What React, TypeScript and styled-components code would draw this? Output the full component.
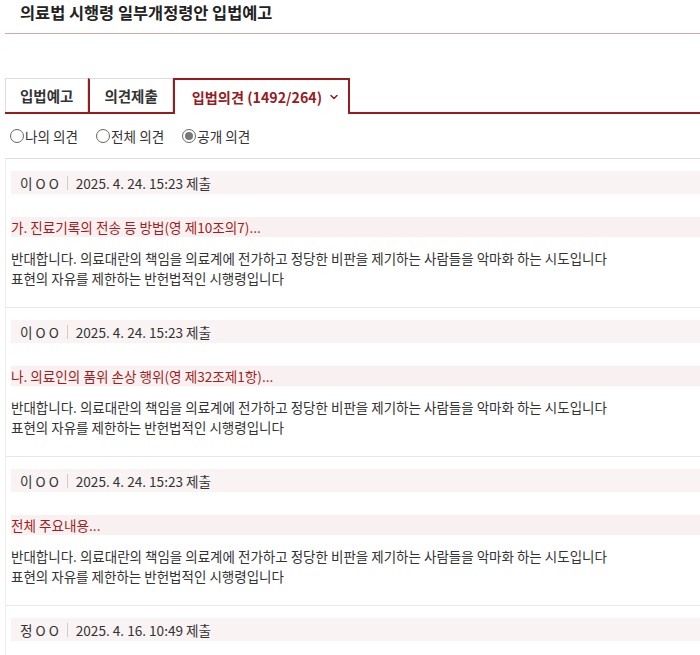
import React, { useState } from "react";
import styled, { createGlobalStyle } from "styled-components";
import { ChevronDown } from "lucide-react";

const GlobalStyle = createGlobalStyle`
  body {
    margin: 0;
    background: #fff;
    font-family: "Noto Sans CJK KR", "Noto Sans", sans-serif;
    color: #333;
  }
`;

interface Opinion {
  name: string;
  date: string;
  subject?: string;
  lines?: string[];
}

const opinions: Opinion[] = [
  {
    name: "이 O O",
    date: "2025. 4. 24. 15:23 제출",
    subject: "가. 진료기록의 전송 등 방법(영 제10조의7)...",
    lines: [
      "반대합니다. 의료대란의 책임을 의료계에 전가하고 정당한 비판을 제기하는 사람들을 악마화 하는 시도입니다",
      "표현의 자유를 제한하는 반헌법적인 시행령입니다",
    ],
  },
  {
    name: "이 O O",
    date: "2025. 4. 24. 15:23 제출",
    subject: "나. 의료인의 품위 손상 행위(영 제32조제1항)...",
    lines: [
      "반대합니다. 의료대란의 책임을 의료계에 전가하고 정당한 비판을 제기하는 사람들을 악마화 하는 시도입니다",
      "표현의 자유를 제한하는 반헌법적인 시행령입니다",
    ],
  },
  {
    name: "이 O O",
    date: "2025. 4. 24. 15:23 제출",
    subject: "전체 주요내용...",
    lines: [
      "반대합니다. 의료대란의 책임을 의료계에 전가하고 정당한 비판을 제기하는 사람들을 악마화 하는 시도입니다",
      "표현의 자유를 제한하는 반헌법적인 시행령입니다",
    ],
  },
  // the last entry runs below the fold, only its header shows
  {
    name: "정 O O",
    date: "2025. 4. 16. 10:49 제출",
  },
];

const Page = styled.div`
  padding-left: 5px;
  height: 655px;
  overflow: hidden;
`;

const Title = styled.h1`
  margin: 0;
  padding: 0 0 9px 15px;
  font-size: 16.4px;
  line-height: 24px;
  font-weight: 700;
  color: #222;
  border-bottom: 1px solid #d6a9a9;
`;

const Tabs = styled.div`
  display: flex;
  margin-top: 44px;
  border-bottom: 2px solid #981b1e;
  height: 34px;
`;

const Tab = styled.button<{ active?: boolean }>`
  display: flex;
  align-items: center;
  gap: 6px;
  padding: ${(p) => (p.active ? "0 8px 0 17px" : "0 14px")};
  margin-bottom: ${(p) => (p.active ? "-2px" : "0")};
  background: #fff;
  font-family: inherit;
  font-size: ${(p) => (p.active ? "14.2px" : "14.5px")};
  font-weight: 700;
  color: ${(p) => (p.active ? "#981b1e" : "#333")};
  border: ${(p) => (p.active ? "2px solid #981b1e" : "1px solid #ddd")};
  border-bottom: none;
  cursor: pointer;

  & + & {
    border-left: ${(p) => (p.active ? "2px solid #981b1e" : "none")};
  }
`;

const RadioRow = styled.div`
  display: flex;
  align-items: center;
  gap: 18px;
  height: 44px;
  padding-left: 5px;
`;

const RadioLabel = styled.label`
  display: flex;
  align-items: center;
  gap: 1px;
  font-size: 13.6px;
  color: #333;
  cursor: pointer;
`;

const RadioDot = styled.span<{ checked?: boolean }>`
  width: 12px;
  height: 12px;
  border-radius: 50%;
  border: 1px solid #666;
  display: flex;
  align-items: center;
  justify-content: center;

  &::after {
    content: "";
    width: 8px;
    height: 8px;
    border-radius: 50%;
    background: ${(p) => (p.checked ? "#777" : "transparent")};
  }
`;

const List = styled.div`
  border-top: 1px solid #ddd;
  border-left: 1px solid #eee;
`;

const Item = styled.div`
  padding: 12px 0 19px 5px;
  border-bottom: 1px solid #e8e8e8;
`;

const Meta = styled.div`
  display: flex;
  align-items: center;
  height: 23px;
  padding-left: 9px;
  background: #f9f3f3;
  font-size: 13.6px;
  color: #333;
`;

const Divider = styled.span`
  width: 1px;
  height: 14px;
  background: #ccc;
  margin: 0 8px;
`;

const Subject = styled.div`
  margin-top: 23px;
  height: 20px;
  line-height: 20px;
  background: #f9f1f1;
  font-size: 13.6px;
  color: #a11d21;
`;

const Body = styled.p`
  margin: 11px 0 0;
  font-size: 13.5px;
  line-height: 20px;
  color: #333;
  white-space: nowrap;
`;

const filters = ["나의 의견", "전체 의견", "공개 의견"];

export default function App() {
  const [filter, setFilter] = useState(2);

  return (
    <Page>
      <GlobalStyle />
      <Title>의료법 시행령 일부개정령안 입법예고</Title>
      <Tabs>
        <Tab>입법예고</Tab>
        <Tab>의견제출</Tab>
        <Tab active>
          입법의견 (1492/264)
          <ChevronDown size={12} strokeWidth={3} />
        </Tab>
      </Tabs>
      <RadioRow>
        {filters.map((f, i) => (
          <RadioLabel key={f} onClick={() => setFilter(i)}>
            <RadioDot checked={filter === i} />
            {f}
          </RadioLabel>
        ))}
      </RadioRow>
      <List>
        {opinions.map((o, i) => (
          <Item key={i}>
            <Meta>
              {o.name}
              <Divider />
              {o.date}
            </Meta>
            {o.subject && <Subject>{o.subject}</Subject>}
            {o.lines && (
              <Body>
                {o.lines.map((l, j) => (
                  <React.Fragment key={j}>
                    {l}
                    <br />
                  </React.Fragment>
                ))}
              </Body>
            )}
          </Item>
        ))}
      </List>
    </Page>
  );
}
